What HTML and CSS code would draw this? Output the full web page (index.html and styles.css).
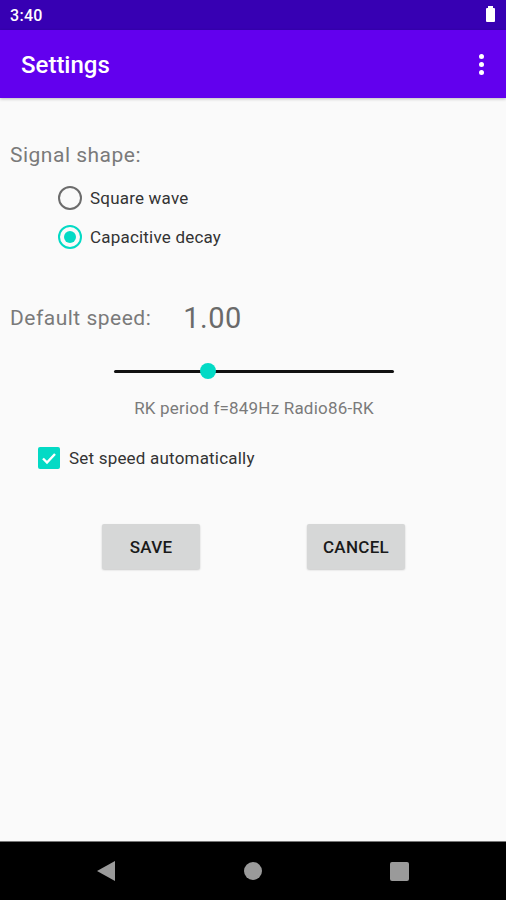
FILE: index.html
```html
<!DOCTYPE html>
<html lang="en">
<head>
   <meta charset="UTF-8">
   <meta name="viewport" content="width=device-width, initial-scale=1.0">
   <title>Settings</title>
   <link rel="stylesheet" href="styles.css">
</head>
<body>

<div class="phone">
	<div class="status-bar">
		<span class="status-time">3:40</span>
		<span class="battery"></span>
	</div>

	<header class="app-bar">
		<h1 class="app-title">Settings</h1>
		<span class="overflow"><i></i><i></i><i></i></span>
	</header>

	<main class="content">
		<p class="label signal-label">Signal shape:</p>
		<ul class="radio-list">
			<li class="radio-item"><span class="radio"></span>Square wave</li>
			<li class="radio-item"><span class="radio is-checked"></span>Capacitive decay</li>
		</ul>

		<div class="speed-row">
			<span class="label">Default speed:</span>
			<span class="speed-value">1.00</span>
		</div>

		<div class="slider">
			<div class="slider-track"></div>
			<div class="slider-thumb"></div>
		</div>
		<p class="slider-caption">RK period f=849Hz Radio86-RK</p>

		<label class="check-row">
			<span class="checkbox">
				<svg width="22" height="22" viewBox="0 0 22 22"><path d="M5 11.5l4 4 8-8.5" fill="none" stroke="#fff" stroke-width="2.4"/></svg>
			</span>
			Set speed automatically
		</label>

		<div class="buttons">
			<button class="btn">SAVE</button>
			<button class="btn">CANCEL</button>
		</div>
	</main>

	<nav class="nav-bar">
		<span class="nav-back"></span>
		<span class="nav-home"></span>
		<span class="nav-recent"></span>
	</nav>
</div>

</body>
</html>
```

FILE: styles.css
```css
*,
::before,
::after {
    padding: 0;
    margin: 0;
    box-sizing: border-box;
}

html,
body {
    height: 100%;
    font-family: Roboto, "Liberation Sans", sans-serif;
    background-color: #fafafa;
}

li {
    list-style-type: none;
}

.phone {
    height: 900px;
    display: flex;
    flex-direction: column;
}

/* status bar */
.status-bar {
    height: 30px;
    flex-shrink: 0;
    display: flex;
    align-items: center;
    justify-content: space-between;
    padding: 0 10px 0 10px;
    background: #3700b3;
    color: #fff;
}

.status-time {
    font-size: 16px;
    font-weight: 500;
    letter-spacing: 0.3px;
}

.battery {
    position: relative;
    width: 9px;
    height: 14px;
    margin-right: 1px;
    border-radius: 1px;
    background: #fff;
}

.battery::before {
    content: "";
    position: absolute;
    top: -2px;
    left: 2px;
    width: 5px;
    height: 2px;
    background: #fff;
}

/* app bar */
.app-bar {
    height: 68px;
    flex-shrink: 0;
    display: flex;
    align-items: center;
    justify-content: space-between;
    padding: 0 22px 0 21px;
    background: #6200ee;
    color: #fff;
    box-shadow: 0 1px 3px rgba(0, 0, 0, 0.25);
}

.app-title {
    font-size: 24px;
    font-weight: 500;
    padding-top: 2px;
}

.overflow {
    display: flex;
    flex-direction: column;
    gap: 3px;
}

.overflow i {
    width: 5px;
    height: 5px;
    border-radius: 50%;
    background: #fff;
}

/* content */
.content {
    flex-grow: 1;
    padding: 45px 10px 0 10px;
}

.label {
    font-size: 21px;
    letter-spacing: 0.5px;
    color: #7a7a7a;
}

.radio-list {
    margin-top: 11px;
    padding-left: 48px;
}

.radio-item {
    display: flex;
    align-items: center;
    gap: 8px;
    height: 39px;
    font-size: 17px;
    letter-spacing: 0.2px;
    color: #333;
}

.radio {
    width: 24px;
    height: 24px;
    border: 2px solid #6c6c6c;
    border-radius: 50%;
    display: flex;
    align-items: center;
    justify-content: center;
}

.radio.is-checked {
    border-color: #03dac5;
}

.radio.is-checked::before {
    content: "";
    width: 12px;
    height: 12px;
    border-radius: 50%;
    background: #03dac5;
}

.speed-row {
    display: flex;
    align-items: center;
    gap: 32px;
    margin-top: 45px;
}

.speed-value {
    font-size: 29px;
    letter-spacing: 0.5px;
    color: #6a6a6a;
}

.slider {
    position: relative;
    width: 280px;
    height: 16px;
    margin: 28px 0 0 104px;
    display: flex;
    align-items: center;
}

.slider-track {
    width: 100%;
    height: 3px;
    border-radius: 2px;
    background: #111;
}

.slider-thumb {
    position: absolute;
    left: 86px;
    top: 0;
    width: 16px;
    height: 16px;
    border-radius: 50%;
    background: #03dac5;
}

.slider-caption {
    margin-top: 19px;
    padding-left: 2px;
    text-align: center;
    font-size: 17px;
    letter-spacing: 0.2px;
    color: #7a7a7a;
}

.check-row {
    display: flex;
    align-items: center;
    gap: 9px;
    margin: 29px 0 0 28px;
    font-size: 17px;
    letter-spacing: 0.2px;
    color: #333;
}

.checkbox {
    width: 22px;
    height: 22px;
    border-radius: 2px;
    background: #03dac5;
    display: flex;
}

.buttons {
    display: flex;
    gap: 107px;
    margin: 55px 0 0 92px;
}

.btn {
    width: 98px;
    height: 45px;
    border: none;
    border-radius: 2px;
    background: #d6d7d7;
    box-shadow: 0 1px 2px rgba(0, 0, 0, 0.2);
    font-family: Roboto, "Liberation Sans", sans-serif;
    font-size: 17px;
    font-weight: 500;
    letter-spacing: 0.3px;
    color: #1a1a1a;
}

/* nav bar */
.nav-bar {
    height: 59px;
    flex-shrink: 0;
    display: flex;
    align-items: center;
    background: #000;
    border-top: 1px solid #777;
}

.nav-back {
    margin-left: 97px;
    width: 0;
    height: 0;
    border-top: 10px solid transparent;
    border-bottom: 10px solid transparent;
    border-right: 18px solid #9a9a9a;
}

.nav-home {
    margin-left: 129px;
    width: 18px;
    height: 18px;
    border-radius: 50%;
    background: #9a9a9a;
}

.nav-recent {
    margin-left: 128px;
    width: 19px;
    height: 19px;
    border-radius: 2px;
    background: #9a9a9a;
}
```
